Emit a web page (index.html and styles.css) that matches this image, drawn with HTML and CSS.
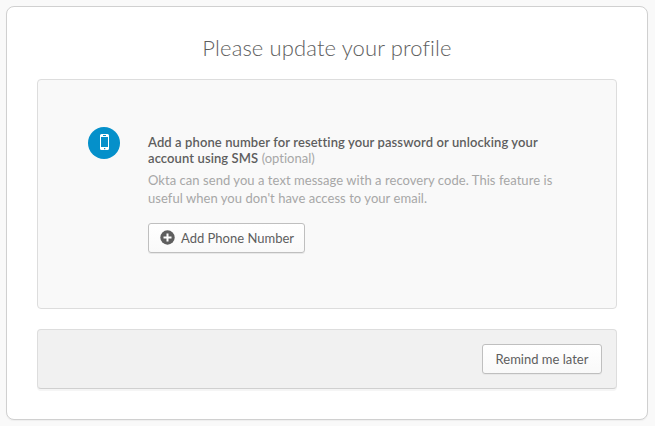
FILE: index.html
```
<!DOCTYPE html>
<html lang="en">
<head>
<meta charset="utf-8">
<title>Please update your profile</title>
<link rel="stylesheet" href="styles.css">
</head>
<body>
<main class="card">
  <h1 class="title">Please update your profile</h1>
  <section class="panel">
    <span class="badge">
      <svg width="32" height="32" viewBox="0 0 32 32" aria-hidden="true">
        <path fill="#fff" fill-rule="evenodd" d="M13.500 7h6A1.500 1.500 0 0 1 21 8.500v13a1.500 1.500 0 0 1-1.500 1.500h-6a1.500 1.500 0 0 1-1.500-1.500v-13A1.500 1.500 0 0 1 13.500 7zM13 10v10h7V10zM15 8v1h3V8zM16 21v1.300h1.300V21z"/>
      </svg>
    </span>
    <div class="content">
      <h2 class="heading">Add a phone number for resetting your password or unlocking your<br>account using SMS <span class="optional">(optional)</span></h2>
      <p class="desc">Okta can send you a text message with a recovery code. This feature is<br>useful when you don't have access to your email.</p>
      <button class="button add" type="button">
        <svg width="15" height="15" viewBox="0 0 15 15" aria-hidden="true"><circle cx="7.500" cy="7.500" r="7.200" fill="#5e5e5e"/><path d="M7.500 3.500v8M3.500 7.500h8" stroke="#fff" stroke-width="2"/></svg>
        <span>Add Phone Number</span>
      </button>
    </div>
  </section>
  <footer class="footer">
    <button class="button later" type="button"><span>Remind me later</span></button>
  </footer>
</main>
</body>
</html>
```
FILE: styles.css
```
* { box-sizing: border-box; }
body {
  margin: 0;
  padding: 6px;
  background: #f9f9f9;
  color: #5e5e5e;
  font: 13px/18px Lato, "Liberation Sans", sans-serif;
  font-variant-ligatures: none;
}
.card {
  width: 642px;
  height: 414px;
  padding: 28px 30px 0;
  background: #fff;
  border: 1px solid #d0d0d0;
  border-radius: 8px;
  box-shadow: 0 1px 1px #eee;
}
.title {
  margin: 0 0 18px;
  font-size: 22px;
  font-weight: 300;
  line-height: 26px;
  letter-spacing: 0.12px;
  text-align: center;
  white-space: nowrap;
}
.panel {
  display: flex;
  gap: 28px;
  height: 230px;
  padding: 47px 50px;
  background: #f9f9f9;
  border: 1px solid #ddd;
  border-radius: 4px;
}
.badge {
  flex: none;
  width: 32px;
  height: 32px;
  border-radius: 50%;
  background: #0590ca;
}
.badge svg { display: block; }
.content { padding-top: 7px; white-space: nowrap; }
.heading {
  margin: 0;
  font-size: 13px;
  font-weight: 600;
  line-height: 16px;
  letter-spacing: 0.1px;
}
.optional { color: #a7a7a7; font-weight: 400; letter-spacing: 0; }
.desc { margin: 5px 0 16px; color: #a7a7a7; letter-spacing: 0.05px; }
.button {
  display: flex;
  align-items: center;
  justify-content: center;
  height: 30px;
  padding: 0;
  font: inherit;
  color: #5e5e5e;
  background: linear-gradient(#fff, #f9f9f9);
  border: 1px solid #bfbfbf;
  border-radius: 3px;
  box-shadow: 0 1px 0 #e8e8e8;
  white-space: nowrap;
}
.add {
  justify-content: flex-start;
  width: 157px;
  gap: 6px;
  padding: 0 0 1px 11px;
}
.later { width: 120px; }
.footer {
  display: flex;
  justify-content: flex-end;
  height: 60px;
  margin-top: 20px;
  padding: 14px;
  background: #f1f1f1;
  border: 1px solid #ddd;
  border-bottom-color: #d0d0d0;
  border-radius: 4px;
  box-shadow: 0 2px 0 #f5f5f5;
}
```
